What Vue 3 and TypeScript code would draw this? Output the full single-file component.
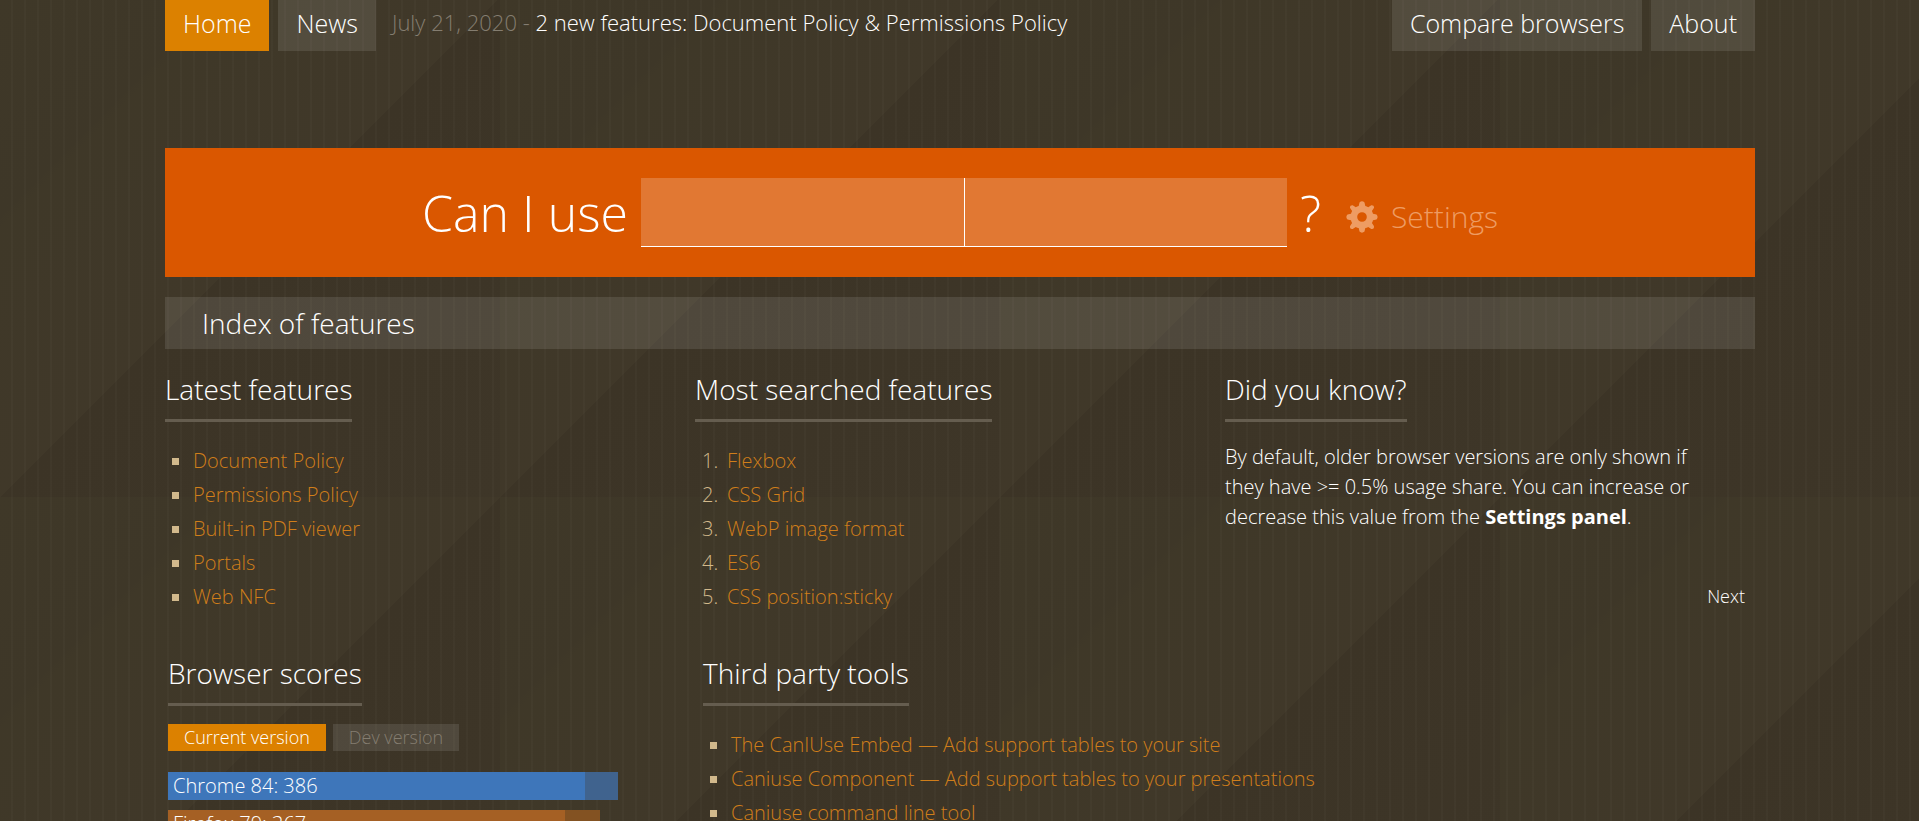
<script setup lang="ts">
const latest: string[] = ['Document Policy', 'Permissions Policy', 'Built-in PDF viewer', 'Portals', 'Web NFC']
const searched: string[] = ['Flexbox', 'CSS Grid', 'WebP image format', 'ES6', 'CSS position:sticky']
const tools: string[] = [
  'The CanIUse Embed — Add support tables to your site',
  'Caniuse Component — Add support tables to your presentations',
  'Caniuse command line tool',
]
interface Score { label: string; tone: string; current: number; total: number }
const scores: Score[] = [
  { label: 'Chrome 84: 386', tone: 'chrome', current: 417, total: 450 },
  { label: 'Firefox 79: 367', tone: 'firefox', current: 397, total: 432 },
]
const share = (value: number): string => `${(value / 450) * 100}%`
</script>

<template>
  <div class="page">
    <div class="wrap">
      <header class="top">
        <nav class="group">
          <a class="tab active" href="#home">Home</a>
          <a class="tab" href="#news">News</a>
        </nav>
        <p class="headline"><span class="date">July 21, 2020 - </span><a href="#latest">2 new features: Document Policy &amp; Permissions Policy</a></p>
        <nav class="group right">
          <a class="tab" href="#compare">Compare browsers</a>
          <a class="tab" href="#about">About</a>
        </nav>
      </header>

      <form class="search" @submit.prevent>
        <label class="big" for="feature">Can I use</label>
        <div class="fields">
          <input id="feature" type="text">
          <input type="text" aria-label="Second feature">
        </div>
        <span class="big">?</span>
        <button class="settings" type="button">
          <svg class="gear" viewBox="0 0 32 32" aria-hidden="true">
            <path fill="currentColor" fill-rule="evenodd" d="M13.5 1.5Q16-.8 18.500 1.500L19.300 5Q20.900 5.400 22.200 6.200L25.300 4.200Q28.600 3.900 27.900 7.100L25.900 9.900Q26.700 11.300 27 12.800L30.500 13.500Q32.700 16 30.500 18.500L27 19.200Q26.700 20.800 25.900 22.100L27.900 25.100Q28.600 28.500 25.300 27.900L22.200 25.900Q20.900 26.700 19.300 27L18.500 30.500Q16 32.800 13.500 30.500L12.700 27Q11.100 26.700 9.800 25.900L6.700 27.900Q3.400 28.500 4.100 25.100L6.100 22.100Q5.300 20.800 5 19.200L1.500 18.500Q-.8 16 1.500 13.500L5 12.800Q5.300 11.300 6.100 9.900L4.100 7.100Q3.400 3.900 6.700 4.200L9.800 6.200Q11.100 5.400 12.700 5ZM16 11.200A4.800 4.800 0 1 0 16 20.800A4.800 4.800 0 1 0 16 11.200Z" />
          </svg>
          <span>Settings</span>
        </button>
      </form>

      <a class="index" href="#index">Index of features</a>

      <main>
        <div class="columns">
          <section>
            <h2>Latest features</h2>
            <ul class="list">
              <li v-for="item in latest" :key="item"><a href="#feature">{{ item }}</a></li>
            </ul>
          </section>
          <section>
            <h2>Most searched features</h2>
            <ol class="list">
              <li v-for="(item, i) in searched" :key="item"><span class="num">{{ i + 1 }}.</span><a href="#feature">{{ item }}</a></li>
            </ol>
          </section>
          <section class="tip">
            <h2>Did you know?</h2>
            <p>By default, older browser versions are only shown if they have &gt;= 0.5% usage share. You can increase or decrease this value from the <b>Settings panel</b>.</p>
            <button class="next" type="button">Next</button>
          </section>
        </div>

        <div class="lower">
          <section class="scores">
            <h2>Browser scores</h2>
            <div class="versions">
              <button class="version active" type="button">Current version</button>
              <button class="version" type="button">Dev version</button>
            </div>
            <div class="bars">
              <div v-for="s in scores" :key="s.label" class="bar" :class="s.tone" :style="{ width: share(s.total) }">
                <div class="fill" :style="{ width: `${(s.current / s.total) * 100}%` }">{{ s.label }}</div>
              </div>
            </div>
          </section>
          <section>
            <h2>Third party tools</h2>
            <ul class="list">
              <li v-for="item in tools" :key="item"><a href="#tool">{{ item }}</a></li>
            </ul>
          </section>
        </div>
      </main>
    </div>
  </div>
</template>

<style>
body {
  margin: 0;
  overflow: hidden;
  background-color: #3f3729;
}
</style>

<style scoped>
.page {
  height: 100vh;
  overflow: hidden;
  color: #fff;
  font-family: "Open Sans", "Noto Sans", sans-serif;
  font-size: 20px;
  font-weight: 300;
  background-image:
    repeating-linear-gradient(90deg, transparent 0 11px, rgba(255, 255, 255, 0.018) 11px 13px),
    linear-gradient(135deg, #3f3828 0%, #3e3728 22%, #3f3828 23%, #403829 50%, #3c3426 50%, #3e3628 100%);
  background-size: auto, 500px 500px;
  background-position: 0 0, 0 -3px;
}
.page * {
  box-sizing: border-box;
}
a {
  color: inherit;
  text-decoration: none;
}
button {
  border: 0;
  padding: 0;
  background: none;
  font: inherit;
  color: inherit;
}
.wrap {
  margin: 0 164px 0 165px;
}
.top {
  display: flex;
  align-items: flex-start;
  height: 51px;
}
.group {
  display: flex;
  gap: 9px;
}
.right {
  margin-left: auto;
}
.tab {
  height: 51px;
  padding: 0 18px;
  background: rgba(255, 255, 255, 0.1);
  font-size: 25px;
  line-height: 47px;
  white-space: nowrap;
}
.tab.active,
.version.active {
  background: #dc8100;
  color: #fff;
}
.headline {
  margin: 0 0 0 16px;
  font-size: 22px;
  line-height: 44px;
  white-space: nowrap;
}
.date {
  color: #847d70;
}
.search {
  display: flex;
  align-items: center;
  justify-content: center;
  height: 129px;
  margin-top: 97px;
  background: #da5700;
}
.big {
  font-size: 50px;
  line-height: 70px;
}
.fields {
  display: grid;
  grid-template-columns: 1fr 1fr;
  width: 646px;
  height: 69px;
  margin: 0 13px;
}
.fields input {
  min-width: 0;
  padding: 0 12px;
  border: 0;
  border-bottom: 1px solid #fff;
  border-radius: 0;
  background: rgba(255, 255, 255, 0.2);
  background-clip: padding-box;
  color: #fff;
  font: inherit;
  font-size: 32px;
  outline: none;
}
.fields input + input {
  border-left: 1px solid #fff;
}
.settings {
  display: flex;
  align-items: center;
  gap: 13px;
  margin: 8px 0 0 25px;
  color: #ee9c63;
  font-size: 30px;
  line-height: 40px;
}
.gear {
  width: 32px;
  height: 32px;
}
.index {
  display: block;
  margin-top: 20px;
  padding-left: 37px;
  background: rgba(255, 255, 255, 0.1);
  font-size: 28px;
  line-height: 52px;
}
.columns {
  display: grid;
  grid-template-columns: 1fr 1fr 1fr;
  padding-top: 16px;
}
h2 {
  width: fit-content;
  margin: 0;
  padding-bottom: 6px;
  border-bottom: 3px solid #655d4f;
  font-size: 28px;
  font-weight: 300;
  line-height: 48px;
  white-space: nowrap;
}
.list {
  margin: 22px 0 0;
  padding: 0;
  list-style: none;
}
.list li {
  display: flex;
  align-items: center;
  padding-left: 7px;
  line-height: 34px;
  white-space: nowrap;
}
.list a {
  color: #d07e1a;
}
ul.list li::before {
  content: "";
  width: 7px;
  height: 7px;
  margin-right: 14px;
  background: #d2b98c;
}
.num {
  width: 25px;
  color: #d2b98c;
}
.tip {
  display: flex;
  flex-direction: column;
}
.tip p {
  max-width: 480px;
  margin: 20px 0 0;
  line-height: 30px;
}
.tip b {
  font-weight: 700;
}
.next {
  align-self: flex-end;
  margin: auto 10px 6px 0;
  font-size: 18px;
  line-height: 24px;
}
.lower {
  display: grid;
  grid-template-columns: 532px 1fr;
  padding: 35px 0 0 3px;
}
.lower > section + section {
  padding-left: 3px;
}
.versions {
  display: flex;
  gap: 7px;
  margin-top: 18px;
}
.version {
  height: 27px;
  padding: 0 16px;
  background: rgba(255, 255, 255, 0.1);
  color: #847d70;
  font-size: 18px;
  line-height: 27px;
}
.bars {
  display: grid;
  gap: 10px;
  width: 450px;
  margin-top: 21px;
}
.bar {
  height: 28px;
}
.fill {
  height: 100%;
  padding-left: 5px;
  font-size: 20px;
  line-height: 28px;
}
.chrome {
  background: #40638e;
}
.chrome .fill {
  background: #3e76ba;
}
.firefox {
  background: #835222;
}
.firefox .fill {
  background: #a56024;
}
</style>
